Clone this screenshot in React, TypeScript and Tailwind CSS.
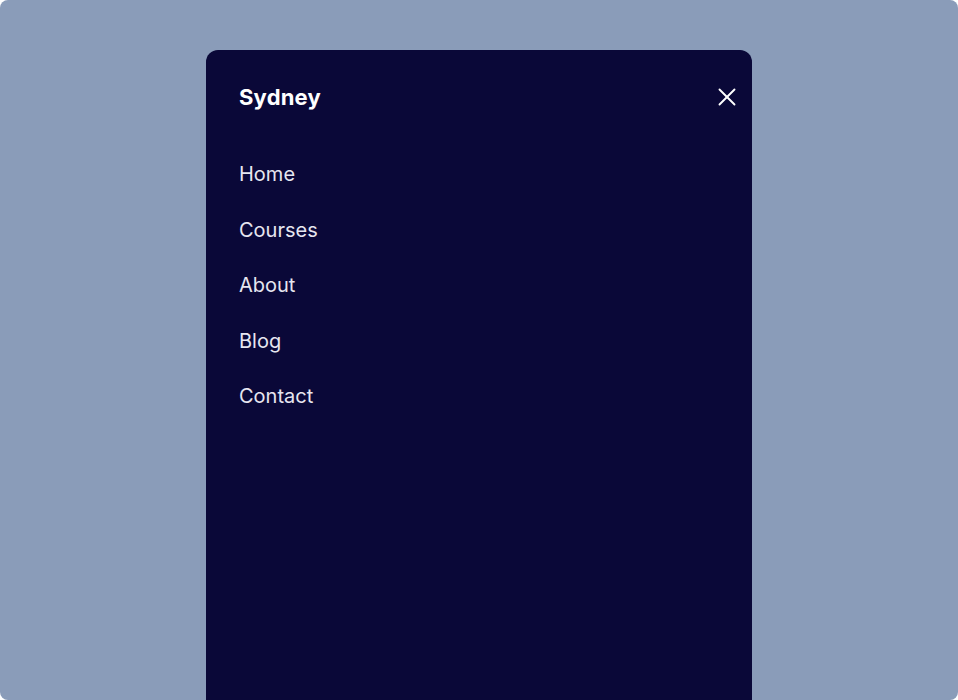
import { X } from 'lucide-react'

const links = ['Home', 'Courses', 'About', 'Blog', 'Contact']

export default function App() {
  return (
    <div className="h-[700px] w-[958px] bg-white">
      <div className="flex h-full w-full justify-center overflow-hidden rounded-lg bg-[#8a9cb9] pt-[50px] font-['Inter',sans-serif]">
        <aside className="h-[700px] w-[546px] shrink-0 rounded-t-xl bg-[#0a0838] px-[33px] pt-[32px]">
          <div className="flex h-[30px] items-center justify-between">
            <span className="text-[22px] font-bold leading-[28px] tracking-[0.2px] text-white">Sydney</span>
            <button className="mr-[-23px] text-white" aria-label="Close menu">
              <X className="h-[30px] w-[30px]" strokeWidth={1.5} />
            </button>
          </div>
          <nav className="mt-[50px] flex flex-col gap-[30.5px]">
            {links.map((l) => (
              <a key={l} href="#" className="text-[20px] leading-[25px] text-[#e6e6f0]">
                {l}
              </a>
            ))}
          </nav>
        </aside>
      </div>
    </div>
  )
}
